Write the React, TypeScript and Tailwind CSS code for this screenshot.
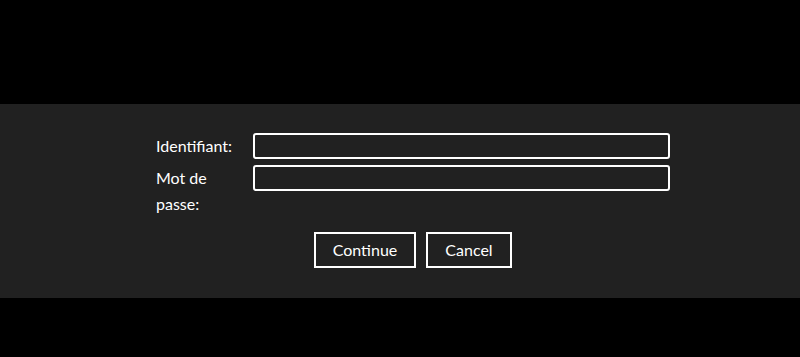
export default function App() {
  return (
    <div className="flex h-[357px] w-full flex-col bg-black font-['Lato','Noto_Sans',sans-serif] text-[16px] text-white">
      <div className="h-[104px] shrink-0" />
      <div className="flex h-[194px] shrink-0 justify-center bg-[#212121] pl-[26px] pt-[29px]">
        <form className="flex w-[514px] flex-col" onSubmit={(e) => e.preventDefault()}>
          <div className="flex items-start gap-[7px]">
            <label className="w-[90px] leading-[26px]">Identifiant:</label>
            <input
              type="text"
              className="h-[26px] w-[417px] rounded-[3px] border-2 border-white bg-[#212121] px-1 text-white outline-none"
            />
          </div>
          <div className="mt-[6px] flex items-start gap-[7px]">
            <label className="w-[90px] leading-[26px]">Mot de passe:</label>
            <input
              type="password"
              className="h-[26px] w-[417px] rounded-[3px] border-2 border-white bg-[#212121] px-1 text-white outline-none"
            />
          </div>
          <div className="mt-[15px] flex justify-center gap-[10px]">
            <button
              type="submit"
              className="h-[36px] w-[102px] border-2 border-white bg-[#212121] text-white"
            >
              Continue
            </button>
            <button
              type="button"
              className="h-[36px] w-[86px] border-2 border-white bg-[#212121] text-white"
            >
              Cancel
            </button>
          </div>
        </form>
      </div>
      <div className="flex-1" />
    </div>
  )
}
